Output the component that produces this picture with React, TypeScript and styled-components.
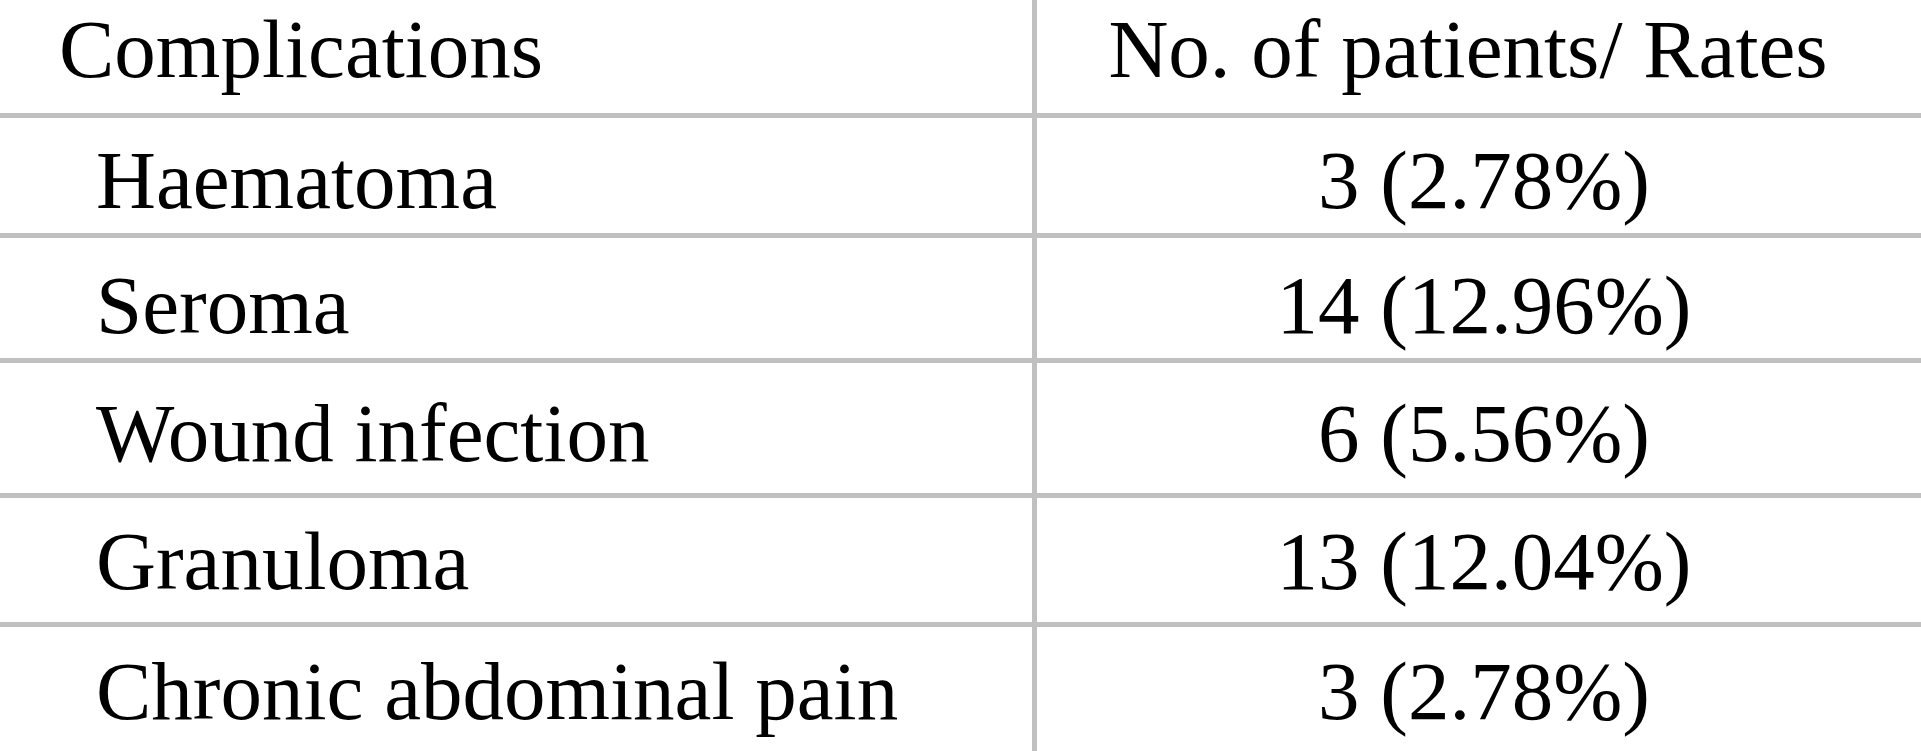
import React from "react";
import styled, { createGlobalStyle } from "styled-components";

type Row = {
  name: string;
  value: string;
  height: number;
  offset: number;
};

const rows: Row[] = [
  { name: "Haematoma", value: "3 (2.78%)", height: 115, offset: 21 },
  { name: "Seroma", value: "14 (12.96%)", height: 120, offset: 26 },
  { name: "Wound infection", value: "6 (5.56%)", height: 130, offset: 29 },
  { name: "Granuloma", value: "13 (12.04%)", height: 124, offset: 22 },
  { name: "Chronic abdominal pain", value: "3 (2.78%)", height: 124, offset: 23 },
];

const App: React.FC = () => {
  return (
    <>
      <GlobalStyle />
      <Table>
        <TableRow $height={113}>
          <NameCell $offset={8} $indent={59}>
            Complications
          </NameCell>
          <ValueCell $offset={8} $shift={-11}>
            No. of patients/ Rates
          </ValueCell>
        </TableRow>
        {rows.map((row) => (
          <TableRow key={row.name} $height={row.height} $ruled>
            <NameCell $offset={row.offset} $indent={96}>
              {row.name}
            </NameCell>
            <ValueCell $offset={row.offset} $shift={5}>
              {row.value}
            </ValueCell>
          </TableRow>
        ))}
      </Table>
    </>
  );
};

export default App;

const GlobalStyle = createGlobalStyle`
  html, body {
    margin: 0;
    padding: 0;
    background: #ffffff;
    overflow: hidden;
  }
`;

const Table = styled.div`
  width: 1921px;
  display: flex;
  flex-direction: column;
  font-family: "Liberation Serif", "Times New Roman", serif;
  font-size: 83px;
  line-height: 1;
  color: #000000;
`;

const TableRow = styled.div<{ $height: number; $ruled?: boolean }>`
  display: grid;
  grid-template-columns: 1032px 1fr;
  height: ${(p) => p.$height}px;
  border-top: ${(p) => (p.$ruled ? "5px solid #c0c0c0" : "none")};
  flex-shrink: 0;
`;

const NameCell = styled.div<{ $offset: number; $indent: number }>`
  padding-top: ${(p) => p.$offset}px;
  padding-left: ${(p) => p.$indent}px;
  white-space: nowrap;
`;

const ValueCell = styled.div<{ $offset: number; $shift: number }>`
  padding-top: ${(p) => p.$offset}px;
  padding-left: ${(p) => Math.max(p.$shift, 0) * 2}px;
  padding-right: ${(p) => Math.max(-p.$shift, 0) * 2}px;
  border-left: 5px solid #c0c0c0;
  text-align: center;
  white-space: nowrap;
`;
